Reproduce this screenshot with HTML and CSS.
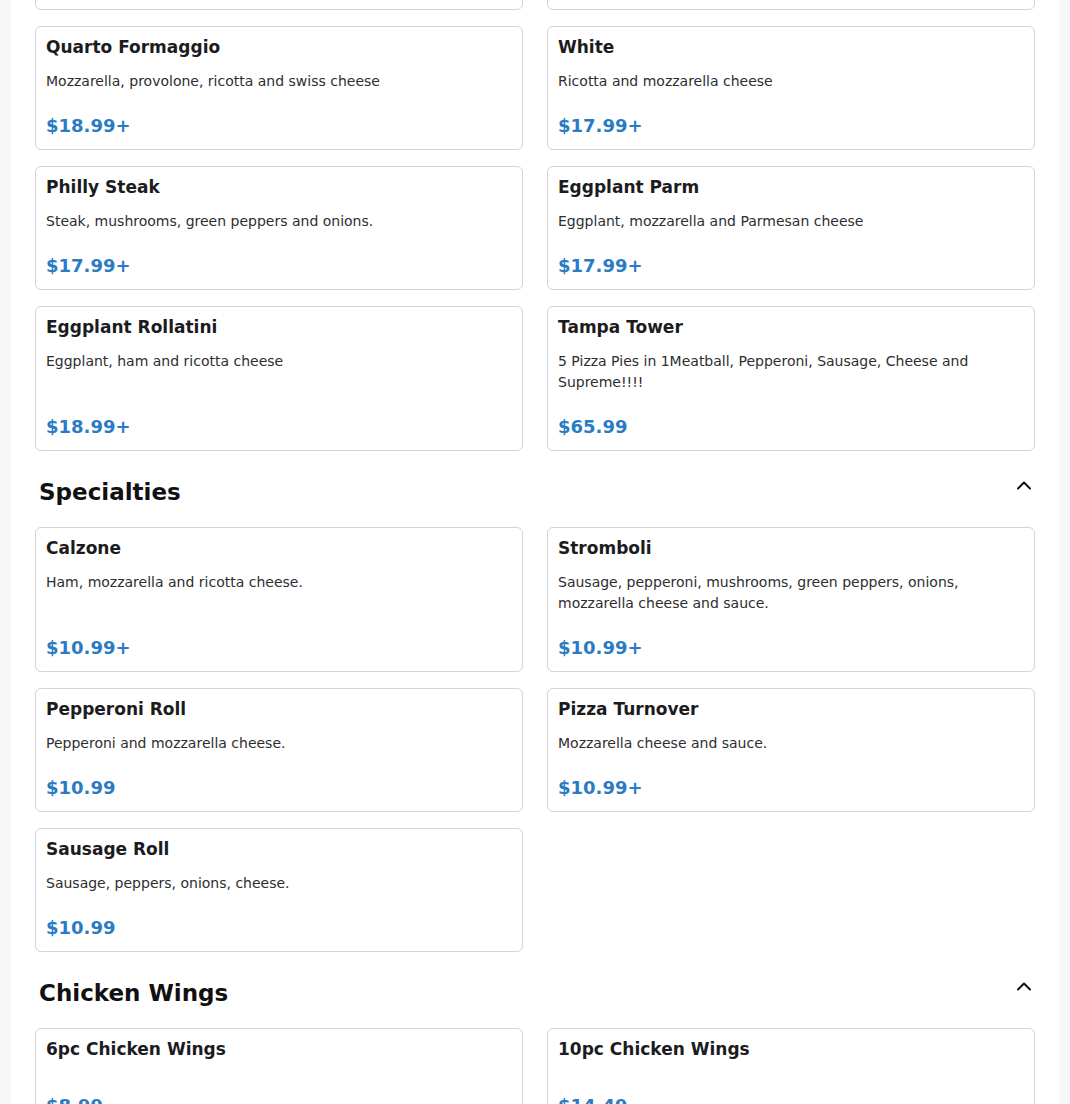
FILE: index.html
```html
<!DOCTYPE html>
<html lang="en">
<head>
<meta charset="utf-8">
<title>Menu</title>
<link rel="stylesheet" href="styles.css">
</head>
<body>
<main class="menu">
  <section class="category category-first">
    <div class="grid">
      <article class="item"><h3 class="item-name">Cheese</h3><p class="item-desc">Classic mozzarella cheese and sauce</p><div class="item-price">$14.99+</div></article>
      <article class="item"><h3 class="item-name">Supreme</h3><p class="item-desc">Pepperoni, sausage, peppers, onions and mushrooms</p><div class="item-price">$18.99+</div></article>
      <article class="item"><h3 class="item-name">Quarto Formaggio</h3><p class="item-desc">Mozzarella, provolone, ricotta and swiss cheese</p><div class="item-price">$18.99+</div></article>
      <article class="item"><h3 class="item-name">White</h3><p class="item-desc">Ricotta and mozzarella cheese</p><div class="item-price">$17.99+</div></article>
      <article class="item"><h3 class="item-name">Philly Steak</h3><p class="item-desc">Steak, mushrooms, green peppers and onions.</p><div class="item-price">$17.99+</div></article>
      <article class="item"><h3 class="item-name">Eggplant Parm</h3><p class="item-desc">Eggplant, mozzarella and Parmesan cheese</p><div class="item-price">$17.99+</div></article>
      <article class="item"><h3 class="item-name">Eggplant Rollatini</h3><p class="item-desc">Eggplant, ham and ricotta cheese</p><div class="item-price">$18.99+</div></article>
      <article class="item"><h3 class="item-name">Tampa Tower</h3><p class="item-desc">5 Pizza Pies in 1Meatball, Pepperoni, Sausage, Cheese and Supreme!!!!</p><div class="item-price">$65.99</div></article>
    </div>
  </section>

  <section class="category">
    <div class="cat-head">
      <h2 class="cat-title">Specialties</h2>
      <button class="cat-toggle" type="button" aria-label="Collapse">
        <svg width="16" height="12" viewBox="0 0 16 12"><polyline points="2,9.5 8,3.5 14,9.5" fill="none" stroke="#111" stroke-width="2" stroke-linecap="round" stroke-linejoin="round"/></svg>
      </button>
    </div>
    <div class="grid">
      <article class="item"><h3 class="item-name">Calzone</h3><p class="item-desc">Ham, mozzarella and ricotta cheese.</p><div class="item-price">$10.99+</div></article>
      <article class="item"><h3 class="item-name">Stromboli</h3><p class="item-desc">Sausage, pepperoni, mushrooms, green peppers, onions, mozzarella cheese and sauce.</p><div class="item-price">$10.99+</div></article>
      <article class="item"><h3 class="item-name">Pepperoni Roll</h3><p class="item-desc">Pepperoni and mozzarella cheese.</p><div class="item-price">$10.99</div></article>
      <article class="item"><h3 class="item-name">Pizza Turnover</h3><p class="item-desc">Mozzarella cheese and sauce.</p><div class="item-price">$10.99+</div></article>
      <article class="item"><h3 class="item-name">Sausage Roll</h3><p class="item-desc">Sausage, peppers, onions, cheese.</p><div class="item-price">$10.99</div></article>
    </div>
  </section>

  <section class="category">
    <div class="cat-head">
      <h2 class="cat-title">Chicken Wings</h2>
      <button class="cat-toggle" type="button" aria-label="Collapse">
        <svg width="16" height="12" viewBox="0 0 16 12"><polyline points="2,9.5 8,3.5 14,9.5" fill="none" stroke="#111" stroke-width="2" stroke-linecap="round" stroke-linejoin="round"/></svg>
      </button>
    </div>
    <div class="grid">
      <article class="item"><h3 class="item-name">6pc Chicken Wings</h3><p class="item-desc"></p><div class="item-price">$8.99</div></article>
      <article class="item"><h3 class="item-name">10pc Chicken Wings</h3><p class="item-desc"></p><div class="item-price">$14.49</div></article>
    </div>
  </section>
</main>
</body>
</html>
```

FILE: styles.css
```css
* { box-sizing: border-box; }

html, body {
  margin: 0;
  padding: 0;
}

body {
  background: #f7f7f8;
  font-family: "DejaVu Sans", Verdana, sans-serif;
  color: #1c1c1e;
}

.menu {
  margin: 0 11px;
  padding: 0 24px 40px;
  background: #ffffff;
  min-height: 1104px;
}

.category-first {
  margin-top: -114px;
}

.cat-head {
  display: flex;
  justify-content: space-between;
  align-items: flex-start;
  padding: 0 3px 0 4px;
  margin: 28px 0 22px;
}

.cat-title {
  margin: 0;
  font-size: 23px;
  font-weight: 700;
  line-height: normal;
  color: #111111;
}

.cat-toggle {
  border: 0;
  background: none;
  padding: 0;
  margin: 0;
  cursor: pointer;
  line-height: 0;
}

.cat-toggle svg {
  display: block;
}

.grid {
  display: grid;
  grid-template-columns: 1fr 1fr;
  column-gap: 24px;
  row-gap: 16px;
}

.item {
  display: flex;
  flex-direction: column;
  border: 1px solid #d4d4d6;
  border-radius: 6px;
  padding: 10px 10px 13px;
  background: #ffffff;
}

.item-name {
  margin: 0;
  font-size: 17px;
  font-weight: 700;
  line-height: 21px;
  color: #1c1c1e;
}

.item-desc {
  margin: 13px 0 23px;
  font-size: 14px;
  line-height: 21px;
  color: #2e2e30;
}

.item-desc:empty {
  margin: 12px 0 23px;
}

.item-price {
  margin-top: auto;
  font-size: 18px;
  font-weight: 700;
  line-height: normal;
  color: #2a7bc4;
}
```
